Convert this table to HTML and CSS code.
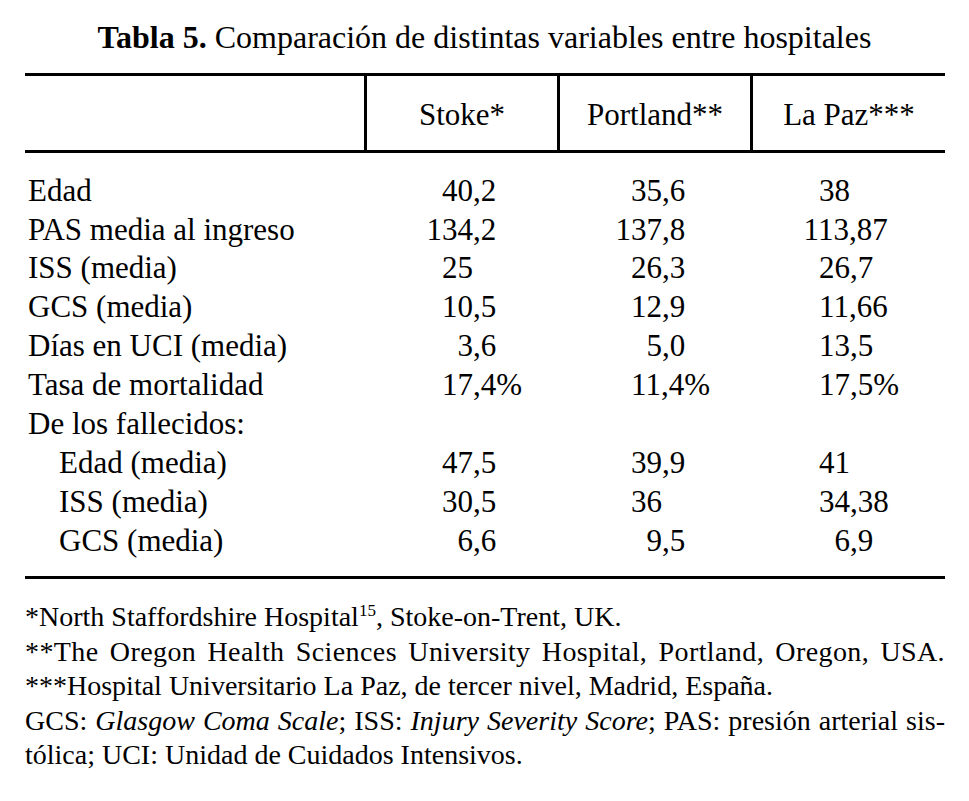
FILE: index.html
```html
<!DOCTYPE html>
<html lang="es">
<head>
<meta charset="utf-8">
<title>Tabla 5</title>
<link rel="stylesheet" href="styles.css">
</head>
<body>
<h1 class="title"><b>Tabla 5.</b> Comparación de distintas variables entre hospitales</h1>
<div class="tbl">
  <div class="thead">
    <div class="th"></div>
    <div class="th sep">Stoke*</div>
    <div class="th sep">Portland**</div>
    <div class="th sep">La Paz***</div>
  </div>
  <div class="tbody">
    <div class="tr"><div class="lab">Edad</div><div class="c1"><span class="i1">40,2</span></div><div class="c2"><span class="i1">35,6</span></div><div class="c3"><span class="i1">38</span></div></div>
    <div class="tr"><div class="lab">PAS media al ingreso</div><div class="c1">134,2</div><div class="c2">137,8</div><div class="c3">113,87</div></div>
    <div class="tr"><div class="lab">ISS (media)</div><div class="c1"><span class="i1">25</span></div><div class="c2"><span class="i1">26,3</span></div><div class="c3"><span class="i1">26,7</span></div></div>
    <div class="tr"><div class="lab">GCS (media)</div><div class="c1"><span class="i1">10,5</span></div><div class="c2"><span class="i1">12,9</span></div><div class="c3"><span class="i1">11,66</span></div></div>
    <div class="tr"><div class="lab">Días en UCI (media)</div><div class="c1"><span class="i2">3,6</span></div><div class="c2"><span class="i2">5,0</span></div><div class="c3"><span class="i1">13,5</span></div></div>
    <div class="tr"><div class="lab">Tasa de mortalidad</div><div class="c1"><span class="i1">17,4%</span></div><div class="c2"><span class="i1">11,4%</span></div><div class="c3"><span class="i1">17,5%</span></div></div>
    <div class="tr"><div class="lab">De los fallecidos:</div><div class="c1"></div><div class="c2"></div><div class="c3"></div></div>
    <div class="tr"><div class="lab sub">Edad (media)</div><div class="c1"><span class="i1">47,5</span></div><div class="c2"><span class="i1">39,9</span></div><div class="c3"><span class="i1">41</span></div></div>
    <div class="tr"><div class="lab sub">ISS (media)</div><div class="c1"><span class="i1">30,5</span></div><div class="c2"><span class="i1">36</span></div><div class="c3"><span class="i1">34,38</span></div></div>
    <div class="tr"><div class="lab sub">GCS (media)</div><div class="c1"><span class="i2">6,6</span></div><div class="c2"><span class="i2">9,5</span></div><div class="c3"><span class="i2">6,9</span></div></div>
  </div>
</div>
<div class="notes">
  <div class="line">*North Staffordshire Hospital<sup class="ref">15</sup>, Stoke-on-Trent, UK.</div>
  <div class="line just spaced">**The Oregon Health Sciences University Hospital, Portland, Oregon, USA.</div>
  <div class="line">***Hospital Universitario La Paz, de tercer nivel, Madrid, España.</div>
  <div class="line just">GCS: <i>Glasgow Coma Scale</i>; ISS: <i>Injury Severity Score</i>; PAS: presión arterial sis-</div>
  <div class="line">tólica; UCI: Unidad de Cuidados Intensivos.</div>
</div>
</body>
</html>
```
FILE: styles.css
```css
* {
  box-sizing: border-box;
}

body {
  margin: 0;
  background: #ffffff;
  color: #000000;
  font-family: "Liberation Serif", "Times New Roman", serif;
}

.title {
  margin: 0;
  padding-top: 17px;
  font-size: 32px;
  line-height: 40px;
  font-weight: normal;
  text-align: center;
}

.title b {
  font-weight: bold;
}

.tbl {
  margin: 16px 0 0 25px;
  width: 920px;
  border-top: 3px solid #000;
  border-bottom: 3px solid #000;
  font-size: 31px;
  line-height: 38.9px;
}

.thead {
  display: grid;
  grid-template-columns: 339px 193px 193px 195px;
  border-bottom: 3px solid #000;
}

.th {
  padding: 19px 0 16px;
  text-align: center;
  line-height: 39px;
  white-space: nowrap;
}

.th.sep {
  border-left: 3px solid #000;
}

.tbody {
  padding: 18.7px 0 15px;
}

.tr {
  display: grid;
  grid-template-columns: 339px 193px 193px 195px;
  height: 38.9px;
  white-space: nowrap;
}

.lab {
  padding-left: 3px;
}

.lab.sub {
  padding-left: 34px;
}

.c1 {
  padding-left: 62.6px;
}

.c2 {
  padding-left: 58.6px;
}

.c3 {
  padding-left: 53.6px;
}

.i1 {
  padding-left: 0.5em;
}

.i2 {
  padding-left: 1em;
}

.notes {
  margin: 21.5px 0 0 25px;
  width: 920px;
  font-size: 28px;
  line-height: 34.5px;
}

.line {
  white-space: nowrap;
}

.line.just {
  white-space: normal;
  text-align: justify;
  text-align-last: justify;
}

.line.spaced {
  letter-spacing: 0.4px;
}

.ref {
  font-size: 17px;
  line-height: 0;
  vertical-align: 10px;
}
```
